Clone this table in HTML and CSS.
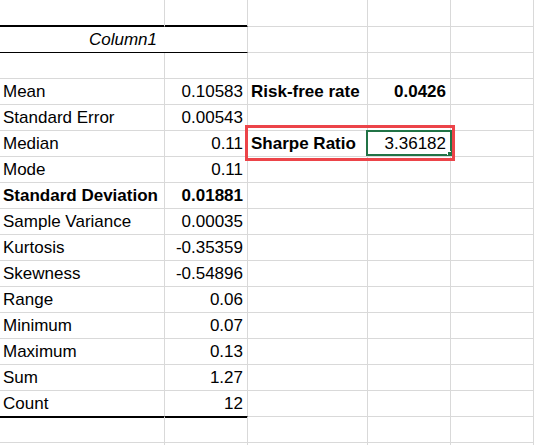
FILE: index.html
```html
<!DOCTYPE HTML>
<html>

<head>
    <title>Descriptive Statistics</title>
    <meta name="viewport" content="width=device-width, initial-scale=1">
    <link rel="stylesheet" href="styles.css">
</head>

<body>
    <div class="sheet">
        <!-- row: top border -->
        <div class="cell top-rule"></div><div class="cell top-rule"></div><div class="cell"></div><div class="cell"></div><div class="cell"></div>
        <!-- row: header -->
        <div class="cell title">Column1</div><div class="cell"></div><div class="cell"></div><div class="cell"></div>
        <!-- row: blank -->
        <div class="cell"></div><div class="cell"></div><div class="cell"></div><div class="cell"></div><div class="cell"></div>

        <div class="cell">Mean</div><div class="cell num">0.10583</div><div class="cell bold">Risk-free rate</div><div class="cell num bold">0.0426</div><div class="cell"></div>
        <div class="cell">Standard Error</div><div class="cell num">0.00543</div><div class="cell"></div><div class="cell"></div><div class="cell"></div>
        <div class="cell">Median</div><div class="cell num">0.11</div><div class="cell bold">Sharpe Ratio</div><div class="cell num">3.36182</div><div class="cell"></div>
        <div class="cell">Mode</div><div class="cell num">0.11</div><div class="cell"></div><div class="cell"></div><div class="cell"></div>
        <div class="cell bold">Standard Deviation</div><div class="cell num bold">0.01881</div><div class="cell"></div><div class="cell"></div><div class="cell"></div>
        <div class="cell">Sample Variance</div><div class="cell num">0.00035</div><div class="cell"></div><div class="cell"></div><div class="cell"></div>
        <div class="cell">Kurtosis</div><div class="cell num">-0.35359</div><div class="cell"></div><div class="cell"></div><div class="cell"></div>
        <div class="cell">Skewness</div><div class="cell num">-0.54896</div><div class="cell"></div><div class="cell"></div><div class="cell"></div>
        <div class="cell">Range</div><div class="cell num">0.06</div><div class="cell"></div><div class="cell"></div><div class="cell"></div>
        <div class="cell">Minimum</div><div class="cell num">0.07</div><div class="cell"></div><div class="cell"></div><div class="cell"></div>
        <div class="cell">Maximum</div><div class="cell num">0.13</div><div class="cell"></div><div class="cell"></div><div class="cell"></div>
        <div class="cell">Sum</div><div class="cell num">1.27</div><div class="cell"></div><div class="cell"></div><div class="cell"></div>
        <div class="cell bottom-rule">Count</div><div class="cell num bottom-rule">12</div><div class="cell"></div><div class="cell"></div><div class="cell"></div>

        <div class="cell"></div><div class="cell"></div><div class="cell"></div><div class="cell"></div><div class="cell"></div>
        <div class="cell"></div><div class="cell"></div><div class="cell"></div><div class="cell"></div><div class="cell"></div>

        <!-- overlays -->
        <div class="highlight"></div>
        <div class="selected"><span class="handle"></span></div>
    </div>
</body>

</html>
```

FILE: styles.css
```css
html {
    font-family: "Liberation Sans", Arial, sans-serif;
}

body {
    margin: 0;
    background: #fff;
    overflow: hidden;
}

.sheet {
    position: relative;
    display: grid;
    grid-template-columns: 165px 83px 120px 83px 83px;
    grid-template-rows: 27px;
    grid-auto-rows: 26px;
    width: 534px;
    height: 445px;
    overflow: hidden;
}

.cell {
    box-sizing: border-box;
    display: flex;
    align-items: flex-end;
    padding: 0 4px 2px 3px;
    border-right: 1px solid #d9d9d9;
    border-bottom: 1px solid #d9d9d9;
    font-size: 17px;
    line-height: 20px;
    color: #000;
    white-space: nowrap;
}

.num {
    justify-content: flex-end;
}

.bold {
    font-weight: bold;
}

.title {
    grid-column: span 2;
    justify-content: center;
    font-style: italic;
    border-bottom-color: #000;
}

.top-rule {
    border-bottom-color: #000;
    box-shadow: inset 0 -1px 0 #000;
}

.bottom-rule {
    border-bottom-color: #000;
    box-shadow: 0 1px 0 #000;
}

.highlight {
    position: absolute;
    left: 245px;
    top: 125px;
    width: 210px;
    height: 36px;
    box-sizing: border-box;
    border: 3px solid #ec4449;
}

.selected {
    position: absolute;
    left: 366px;
    top: 130px;
    width: 86px;
    height: 26px;
    box-sizing: border-box;
    border: 2px solid #217346;
}

.handle {
    position: absolute;
    right: -2px;
    bottom: -2px;
    width: 4px;
    height: 4px;
    background: #217346;
    box-shadow: -1px -1px 0 #fff;
}
```
